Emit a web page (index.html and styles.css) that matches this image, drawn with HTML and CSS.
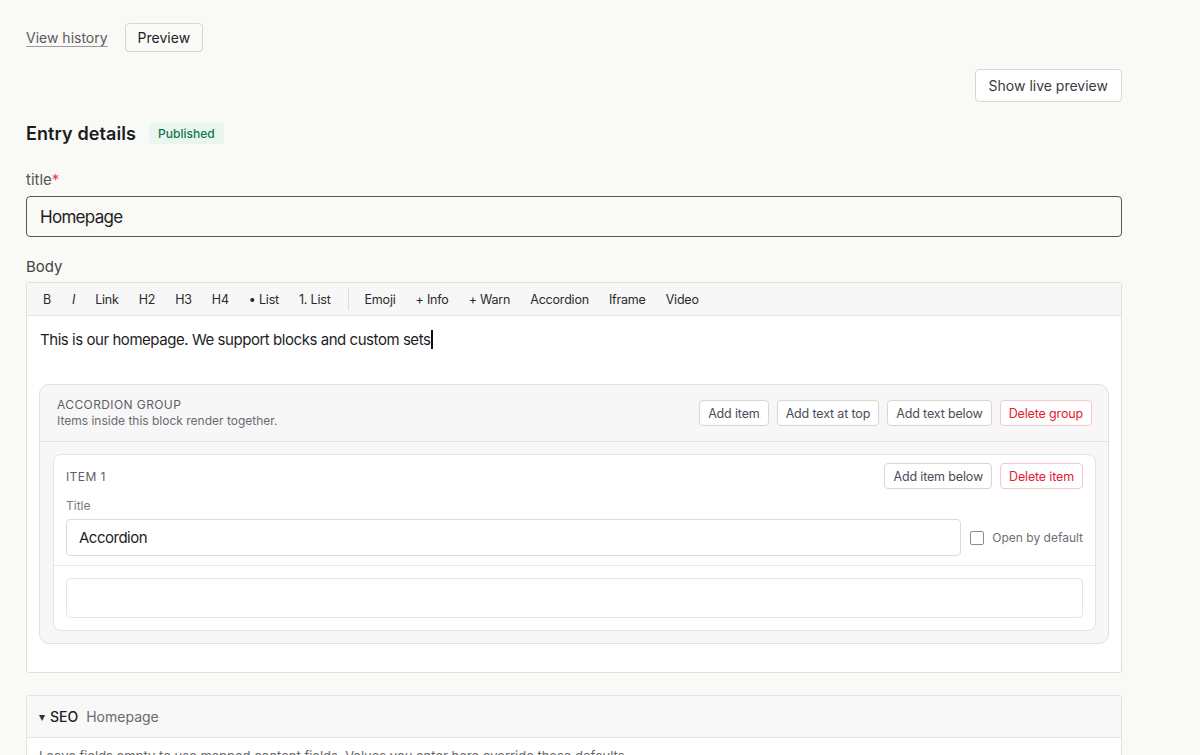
FILE: index.html
```html
<!DOCTYPE html>
<html>
<head>
<meta charset="utf-8">
<link rel="stylesheet" href="styles.css">
</head>
<body>
<div class="page">
  <div class="topbar">
    <a class="link" href="#">View history</a>
    <button class="btn btn-top">Preview</button>
  </div>
  <div class="live-row">
    <button class="btn btn-live">Show live preview</button>
  </div>
  <div class="heading-row">
    <h2 class="heading">Entry details</h2>
    <span class="badge">Published</span>
  </div>

  <label class="label">title<span class="req">*</span></label>
  <div class="title-input">Homepage</div>

  <label class="label label-body">Body</label>
  <div class="editor">
    <div class="toolbar">
      <span class="tb tb-b">B</span>
      <span class="tb tb-i">I</span>
      <span class="tb">Link</span>
      <span class="tb">H2</span>
      <span class="tb">H3</span>
      <span class="tb">H4</span>
      <span class="tb">• List</span>
      <span class="tb tb-last">1. List</span>
      <span class="sep"></span>
      <span class="tb">Emoji</span>
      <span class="tb">+ Info</span>
      <span class="tb">+ Warn</span>
      <span class="tb">Accordion</span>
      <span class="tb">Iframe</span>
      <span class="tb">Video</span>
    </div>
    <div class="content">
      <p class="para">This is our homepage. We support blocks and custom sets<span class="caret"></span></p>
      <div class="group">
        <div class="group-head">
          <div class="group-info">
            <div class="group-title">ACCORDION GROUP</div>
            <div class="group-sub">Items inside this block render together.</div>
          </div>
          <div class="actions">
            <button class="btn btn-sm">Add item</button>
            <button class="btn btn-sm">Add text at top</button>
            <button class="btn btn-sm">Add text below</button>
            <button class="btn btn-sm btn-danger">Delete group</button>
          </div>
        </div>
        <div class="group-body">
          <div class="item">
            <div class="item-top">
              <div class="item-head">
                <span class="item-title">ITEM 1</span>
                <div class="actions">
                  <button class="btn btn-sm">Add item below</button>
                  <button class="btn btn-sm btn-danger">Delete item</button>
                </div>
              </div>
              <div class="field-label">Title</div>
              <div class="field-row">
                <div class="item-input">Accordion</div>
                <label class="check"><span class="box"></span>Open by default</label>
              </div>
            </div>
            <div class="item-bottom">
              <div class="empty-box"></div>
            </div>
          </div>
        </div>
      </div>
    </div>
  </div>

  <div class="seo">
    <div class="seo-head"><span class="tri">▾</span><span class="seo-name">SEO</span><span class="seo-sub">Homepage</span></div>
    <div class="seo-body">Leave fields empty to use mapped content fields. Values you enter here override these defaults.</div>
  </div>
</div>
</body>
</html>
```
FILE: styles.css
```css
* { box-sizing: border-box; }
html, body { margin: 0; padding: 0; }
body {
  background: #f9f9f6;
  font-family: Inter, "Noto Sans", sans-serif;
  color: #1d1d1f;
}
.page {
  width: 1096px;
  margin-left: 26px;
  padding-top: 23px;
}
.topbar {
  display: flex;
  align-items: center;
  gap: 17px;
}
.link {
  color: #5a5a62;
  font-size: 14px;
  text-decoration: underline;
  text-underline-offset: 3px;
  text-decoration-color: #9a9aa0;
}
.btn {
  font-family: Inter, "Noto Sans", sans-serif;
  background: #fff;
  border: 1px solid #d6d6d6;
  border-radius: 4px;
  color: #333;
  cursor: pointer;
}
.btn-top {
  height: 29px;
  padding: 0 12px;
  font-size: 14px;
  color: #222;
  background: #fafaf8;
}
.live-row {
  display: flex;
  justify-content: flex-end;
  margin-top: 17px;
}
.btn-live {
  height: 33px;
  padding: 0 13px;
  font-size: 14px;
  color: #3a3a40;
}
.heading-row {
  display: flex;
  align-items: center;
  gap: 13px;
  margin-top: 21px;
}
.heading {
  margin: 0;
  font-size: 18px;
  font-weight: 600;
  color: #1c1c1e;
  letter-spacing: 0.1px;
}
.badge {
  background: #e9f6ef;
  color: #14754c;
  font-size: 12px;
  font-weight: 500;
  height: 21px;
  padding: 0 9px;
  border-radius: 4px;
  display: flex;
  align-items: center;
}
.label {
  display: block;
  font-size: 15px;
  color: #555;
  margin-top: 27px;
  margin-bottom: 7px;
  line-height: 18px;
}
.label-body { margin-top: 21px; margin-bottom: 6px; color: #444; }
.req { color: #e5484d; }
.title-input {
  height: 41px;
  border: 1.5px solid #555;
  border-radius: 4px;
  padding: 0 13px;
  display: flex;
  align-items: center;
  font-size: 17px;
  letter-spacing: -0.7px;
  color: #1d1d1f;
}
.editor {
  background: #fff;
  border: 1px solid #dedede;
  border-radius: 3px;
  padding-bottom: 28px;
}
.toolbar {
  display: flex;
  align-items: center;
  height: 33px;
  background: #f7f7f7;
  border-bottom: 1px solid #e4e4e4;
  padding-left: 16px;
  font-size: 12.5px;
  letter-spacing: -0.2px;
  color: #2a2a2a;
}
.tb { margin-right: 20px; }
.tb-b { margin-right: 21px; }
.tb-i { font-style: italic; margin-right: 20px; }
.tb-last { margin-right: 17px; }
.sep {
  width: 1px;
  height: 22px;
  background: #dcdcdc;
  margin-right: 16px;
}
.content { padding: 0 12px; }
.para {
  margin: 14px 0 0 1px;
  font-size: 15px;
  letter-spacing: -0.45px;
  line-height: 20px;
  color: #1d1d1f;
}
.caret {
  display: inline-block;
  width: 1.5px;
  height: 19px;
  background: #111;
  vertical-align: -4px;
  margin-left: 1px;
}
.group {
  margin-top: 34px;
  background: #f7f7f7;
  border: 1px solid #e0e0e0;
  border-radius: 10px;
}
.group-head {
  display: flex;
  justify-content: space-between;
  align-items: center;
  height: 57px;
  padding: 0 16px 0 17px;
  border-bottom: 1px solid #e4e4e4;
}
.group-title {
  font-size: 12px;
  letter-spacing: 0.4px;
  color: #5e5e66;
  line-height: 16px;
}
.group-sub {
  font-size: 12px;
  color: #6a6a70;
  line-height: 16px;
}
.actions { display: flex; gap: 8px; }
.btn-sm {
  height: 26px;
  padding: 0 8px;
  font-size: 12.5px;
  letter-spacing: -0.15px;
  color: #4d4d55;
}
.btn-danger {
  color: #e5202f;
  border-color: #f6c8cb;
}
.group-body { padding: 12px 12px 12px 13px; }
.item {
  background: #fff;
  border: 1px solid #e4e4e4;
  border-radius: 8px;
}
.item-top {
  padding: 8px 12px 9px 12px;
  border-bottom: 1px solid #e8e8e8;
}
.item-head {
  display: flex;
  justify-content: space-between;
  align-items: center;
}
.item-title {
  font-size: 12px;
  letter-spacing: 0.4px;
  color: #5e5e66;
}
.field-label {
  font-size: 12px;
  color: #7a7a80;
  margin-top: 9px;
  line-height: 15px;
}
.field-row {
  display: flex;
  align-items: center;
  gap: 9px;
  margin-top: 6px;
}
.item-input {
  flex: 1;
  height: 37px;
  border: 1px solid #dcdcdc;
  border-radius: 4px;
  padding: 0 12px;
  display: flex;
  align-items: center;
  font-size: 15px;
  letter-spacing: -0.5px;
  color: #1d1d1f;
}
.check {
  display: flex;
  align-items: center;
  gap: 8px;
  font-size: 12px;
  color: #6e6e76;
}
.box {
  width: 14px;
  height: 14px;
  border: 1.5px solid #8a8a92;
  border-radius: 2px;
  background: #fff;
}
.item-bottom { padding: 12px; }
.empty-box {
  height: 40px;
  border: 1px solid #e6e6e6;
  border-radius: 4px;
}
.seo {
  margin-top: 22px;
  border: 1px solid #e2e2e2;
  border-radius: 3px;
  background: #fff;
}
.seo-head {
  height: 42px;
  display: flex;
  align-items: center;
  padding-left: 12px;
  background: #f8f8f8;
  border-bottom: 1px solid #e4e4e4;
  font-size: 14px;
}
.tri { font-size: 12px; color: #333; margin-right: 5px; }
.seo-name { font-weight: 500; color: #222; margin-right: 8px; }
.seo-sub { color: #6a6a70; }
.seo-body {
  padding: 10px 12px;
  font-size: 13px;
  color: #666;
}
```
